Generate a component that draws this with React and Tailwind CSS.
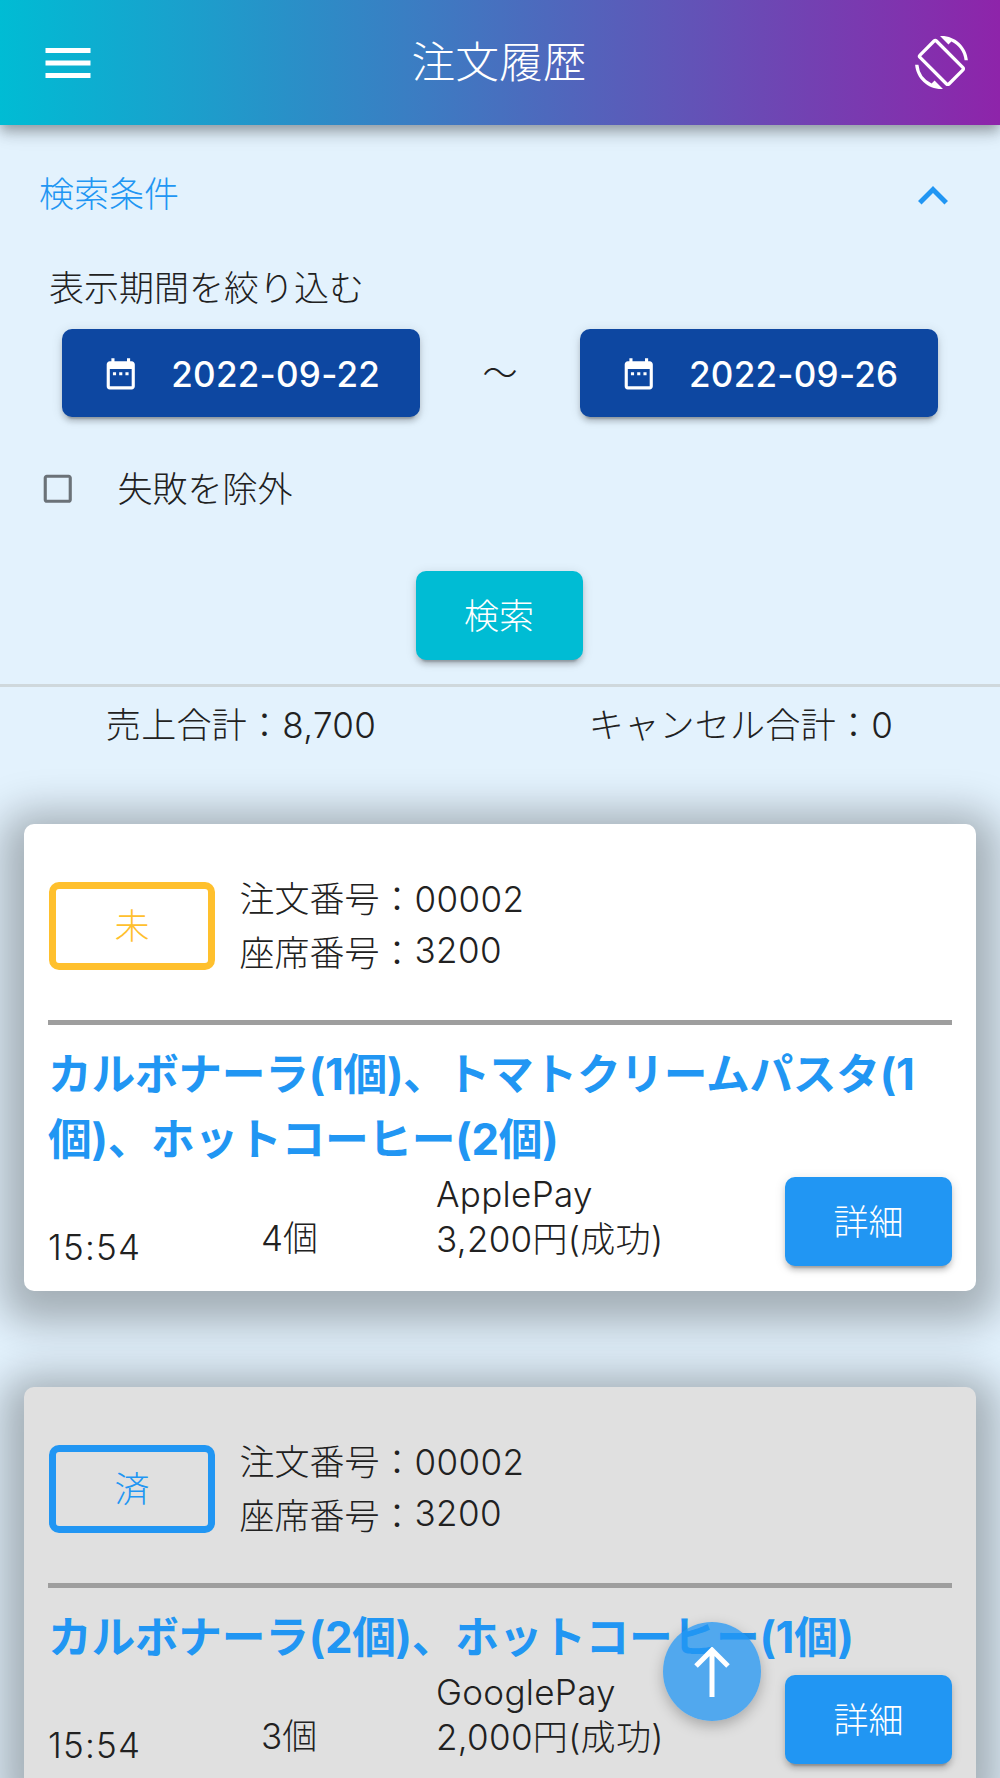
import React from "react";
import { MdMenu, MdScreenRotation, MdExpandLess, MdDateRange, MdCheckBoxOutlineBlank } from "react-icons/md";

const btnShadow = "shadow-[0_7px_2px_-5px_rgba(0,0,0,0.2),0_5px_5px_0_rgba(0,0,0,0.14),0_2px_12px_0_rgba(0,0,0,0.12)]";

function DateButton({ children }) {
  return (
    <button className={`flex h-[88px] w-[358px] items-center justify-center rounded-[10px] bg-[#0d47a1] pt-[2px] text-white font-medium tracking-[0.25px] ${btnShadow}`}>
      <MdDateRange className="mr-[32px] shrink-0" size={37.5} />
      <span>{children}</span>
    </button>
  );
}

function Card({ bg, badge, badgeColor, title, count, pay, amount }) {
  return (
    <div className={`mx-[24px] rounded-[10px] pl-[25px] pr-[24px] pt-[48px] pb-[25px] shadow-[0_10px_42px_22px_rgba(0,0,0,0.28)] ${bg}`}>
      <div className="flex h-[104px] items-start">
        <div className={`mt-[10px] flex h-[88px] w-[166px] items-center justify-center rounded-[10px] border-[7.5px] ${badgeColor}`}>
          {badge}
        </div>
        <div className="ml-[24.5px]">
          <div className="h-[52px] pt-[1px] leading-[52px]">注文番号：<span className="tracking-[0.4px]">00002</span></div>
          <div className="h-[52px] leading-[52px]">座席番号：<span className="align-[3px] tracking-[0.4px]">3200</span></div>
        </div>
      </div>
      <div className="-ml-[1px] mt-[44px] h-[5px] bg-[#9e9e9e]" />
      <div className="mt-[17px] -ml-[1px] text-[43.75px] font-bold leading-[65px] tracking-[-0.3px] text-[#2196f3]">{title}</div>
      <div className="flex h-[94px] items-start">
        <div className="-ml-[1px] mt-[53px] h-[45px] w-[213px] leading-[45px] tracking-[1.2px]">15:54</div>
        <div className="mt-[44px] h-[45px] w-[175px] leading-[45px]">{count}</div>
        <div className="tracking-[0.3px]">
          <div className="h-[45px] leading-[45px]">{pay}</div>
          <div className="h-[45px] leading-[45px]">{amount}</div>
        </div>
        <button className={`ml-auto mt-[4.5px] h-[89px] w-[167px] rounded-[10px] bg-[#2196f3] pt-[2px] text-white ${btnShadow}`}>詳細</button>
      </div>
    </div>
  );
}

export default function App() {
  return (
    <div className="relative h-screen overflow-hidden bg-[#e3f2fd] font-[family-name:Inter,'Noto_Sans_CJK_JP',sans-serif] text-[35px] font-light text-[#212121]">
      <header className="relative z-10 flex h-[125px] items-center justify-between bg-[linear-gradient(to_right,#00bcd4,#8e24aa)] pl-[38px] pr-[32px] text-white shadow-[0_5px_10px_-2px_rgba(0,0,0,0.2),0_10px_12px_0_rgba(0,0,0,0.14),0_2px_25px_0_rgba(0,0,0,0.12)]">
        <MdMenu size={60} />
        <h1 className="pr-[15px] text-[43.75px] font-light">注文履歴</h1>
        <MdScreenRotation size={53} />
      </header>

      <section>
        <div className="flex h-[138px] items-center justify-between pl-[39px] pr-[37px] pt-[3px] text-[#2196f3]">
          <span className="-mt-[3px]">検索条件</span>
          <MdExpandLess size={60} />
        </div>
        <div className="h-[50px] pl-[49px] leading-[50px]">表示期間を絞り込む</div>
        <div className="mt-[16px] flex items-center justify-between px-[62px]">
          <DateButton>2022-09-22</DateButton>
          <span>〜</span>
          <DateButton>2022-09-26</DateButton>
        </div>
        <div className="ml-[39px] mt-[47px] flex h-[50px] items-center leading-[50px]">
          <MdCheckBoxOutlineBlank size={37.5} className="text-[#6b7278]" />
          <span className="ml-[41px]">失敗を除外</span>
        </div>
        <div className="mt-[57px] flex justify-center">
          <button className={`mr-[2px] h-[89px] w-[167px] rounded-[10px] bg-[#00bcd4] pt-[2px] text-white ${btnShadow}`}>検索</button>
        </div>
        <div className="mt-[24px] h-[3px] bg-[#cfd8dc]" />
        <div className="mt-[13px] grid h-[50px] grid-cols-[482px_518px] text-center leading-[50px] tracking-[0.3px]">
          <div>売上合計：8,700</div>
          <div>キャンセル合計：0</div>
        </div>
      </section>

      <div className="mt-[74px] flex flex-col gap-[96px]">
        <Card
          bg="bg-white"
          badge="未"
          badgeColor="border-[#ffc02d] text-[#ffc02d]"
          title="カルボナーラ(1個)、トマトクリームパスタ(1個)、ホットコーヒー(2個)"
          count="4個"
          pay="ApplePay"
          amount="3,200円(成功)"
        />
        <Card
          bg="bg-[#e0e0e0]"
          badge="済"
          badgeColor="border-[#2196f3] text-[#2196f3]"
          title="カルボナーラ(2個)、ホットコーヒー(1個)"
          count="3個"
          pay="GooglePay"
          amount="2,000円(成功)"
        />
      </div>

      <button className="absolute bottom-[57px] right-[239px] flex h-[99px] w-[98px] items-center justify-center rounded-full bg-[#2196f3]/75 text-white shadow-[0_5px_14px_rgba(0,0,0,0.25)]">
        <svg width="36" height="50" viewBox="0 0 36 50" fill="none" stroke="currentColor" strokeWidth="5">
          <path d="M18 3V50M2 19L18 3L34 19" />
        </svg>
      </button>
    </div>
  );
}
